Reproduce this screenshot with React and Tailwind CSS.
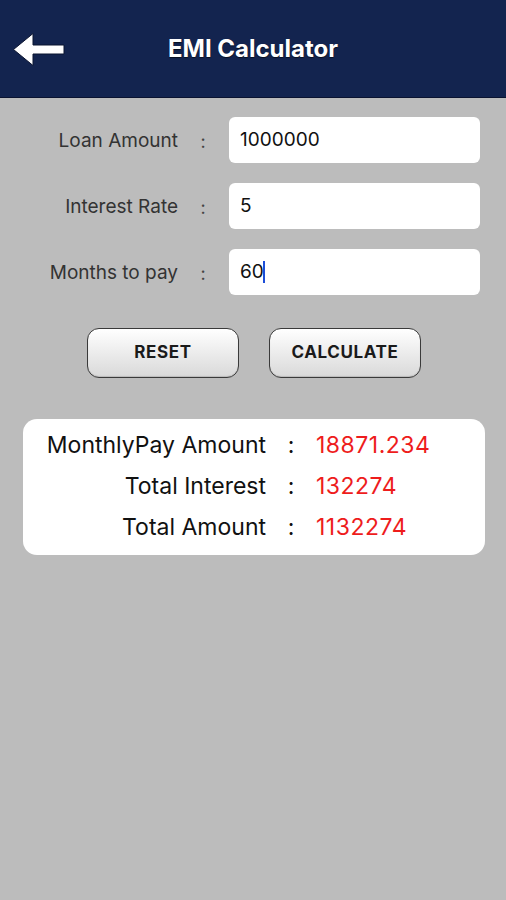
import React from "react";

const font = { fontFamily: 'Inter, "Liberation Sans", Arial, sans-serif' };

function Row({ label, value, caret }) {
  return (
    <div className="flex items-center h-[46px]">
      <div className="w-[178px] text-right text-[19px] text-[#333333] mt-[2px]">{label}</div>
      <div className="w-[51px] text-center text-[18px] text-[#444444] pr-[1px] mt-[2px]">:</div>
      <div className="w-[251px] h-[46px] bg-white rounded-[6px] flex items-center pl-[11px] text-[19px] text-[#111111]">
        {value}
        {caret && <span className="inline-block w-[2px] h-[22px] bg-[#1d4ed8] ml-[-1px]" />}
      </div>
    </div>
  );
}

function Btn({ children }) {
  return (
    <div className="w-[152px] h-[50px] rounded-[12px] border border-[#3a3a3a] bg-gradient-to-b from-white to-[#d9d9d9] flex items-center justify-center text-[17px] font-bold text-[#1a1a1a] tracking-[0.6px] shadow-[inset_0_-1px_1px_rgba(0,0,0,0.15)]">
      {children}
    </div>
  );
}

function ResRow({ label, value }) {
  return (
    <div className="flex items-center h-[41px]">
      <div className="w-[243px] text-right text-[23px] text-[#111111]">{label}</div>
      <div className="w-[50px] text-center text-[23px] text-[#111111]">:</div>
      <div className="text-[23px] text-[#ee1c1c] tracking-[0.5px]">{value}</div>
    </div>
  );
}

export default function App() {
  return (
    <div className="w-[506px] h-[900px] bg-[#bcbcbc] flex flex-col" style={font}>
      <div className="h-[98px] bg-[#13244f] border-b border-[#0a1330] relative flex items-center justify-center">
        <svg className="absolute left-[12px] top-[32px]" width="54" height="35" viewBox="0 0 54 35">
          <path d="M1.5 17.5 L21 1.5 L21 13 L52 13 L52 22 L21 22 L21 33.5 Z" fill="#ffffff" stroke="#0b1430" strokeWidth="1" strokeLinejoin="round" />
        </svg>
        <div className="text-white text-[24px] font-bold mt-[1px] [text-shadow:0_1px_1px_rgba(0,0,0,0.6)]">EMI Calculator</div>
      </div>
      <div className="flex flex-col gap-[20px] pt-[19px]">
        <Row label="Loan Amount" value="1000000" />
        <Row label="Interest Rate" value="5" />
        <Row label="Months to pay" value="60" caret />
      </div>
      <div className="flex gap-[30px] pl-[87px] pt-[33px]">
        <Btn>RESET</Btn>
        <Btn>CALCULATE</Btn>
      </div>
      <div className="mx-[23px] mt-[41px] w-[462px] h-[136px] bg-white rounded-[14px] pt-[6px]">
        <ResRow label="MonthlyPay Amount" value="18871.234" />
        <ResRow label="Total Interest" value="132274" />
        <ResRow label="Total Amount" value="1132274" />
      </div>
    </div>
  );
}
